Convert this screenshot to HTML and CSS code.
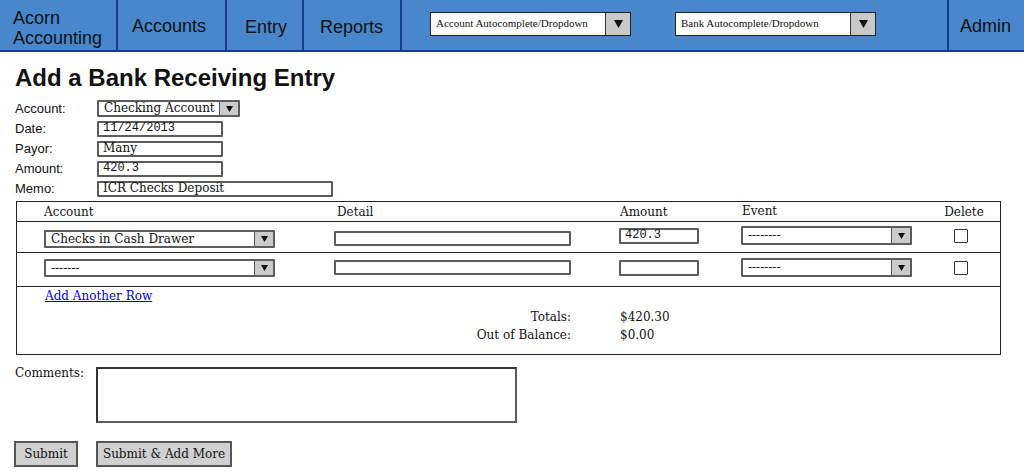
FILE: index.html
```html
<!DOCTYPE html>
<html lang="en">
<head>
<meta charset="utf-8">
<title>Add a Bank Receiving Entry</title>
<link rel="stylesheet" href="styles.css">
</head>
<body>
<header class="topbar">
  <div class="nav-cell brand">Acorn<br>Accounting</div>
  <div class="nav-cell accounts">Accounts</div>
  <div class="nav-cell entry">Entry</div>
  <div class="nav-cell reports">Reports</div>
  <div class="nav-tools">
    <div class="hselect"><span class="hselect-val">Account Autocomplete/Dropdown</span><span class="hselect-btn"><svg width="9" height="8" viewBox="0 0 9 8"><polygon points="0,0 9,0 4.5,8" fill="#111"/></svg></span></div>
    <div class="hselect"><span class="hselect-val">Bank Autocomplete/Dropdown</span><span class="hselect-btn"><svg width="9" height="8" viewBox="0 0 9 8"><polygon points="0,0 9,0 4.5,8" fill="#111"/></svg></span></div>
  </div>
  <div class="nav-cell admin">Admin</div>
</header>

<main class="page">
  <h1 class="title">Add a Bank Receiving Entry</h1>

  <div class="form-grid">
    <span class="flabel">Account:</span>
    <div class="select sel-account"><span class="select-val">Checking Account</span><span class="select-btn"><svg width="7" height="6" viewBox="0 0 7 6"><polygon points="0,0 7,0 3.5,6" fill="#111"/></svg></span></div>
    <span class="flabel">Date:</span>
    <div class="field w-short mono">11/24/2013</div>
    <span class="flabel">Payor:</span>
    <div class="field w-short">Many</div>
    <span class="flabel">Amount:</span>
    <div class="field w-short mono">420.3</div>
    <span class="flabel">Memo:</span>
    <div class="field w-memo">ICR Checks Deposit</div>
  </div>

  <div class="lines">
    <div class="lrow lhead">
      <div class="c-acct">Account</div>
      <div class="c-detail hpad">Detail</div>
      <div class="c-amt hpad1">Amount</div>
      <div class="c-event hpad1 up">Event</div>
      <div class="c-del">Delete</div>
    </div>
    <div class="lrow r1">
      <div class="c-acct"><div class="select sel-line down3"><span class="select-val">Checks in Cash Drawer</span><span class="select-btn"><svg width="7" height="6" viewBox="0 0 7 6"><polygon points="0,0 7,0 3.5,6" fill="#111"/></svg></span></div></div>
      <div class="c-detail"><div class="field w-detail down2"></div></div>
      <div class="c-amt"><div class="field w-amt mono up2">420.3</div></div>
      <div class="c-event"><div class="select sel-event up2"><span class="select-val">--------</span><span class="select-btn"><svg width="7" height="6" viewBox="0 0 7 6"><polygon points="0,0 7,0 3.5,6" fill="#111"/></svg></span></div></div>
      <div class="c-del"><span class="check"></span></div>
    </div>
    <div class="lrow r2">
      <div class="c-acct"><div class="select sel-line"><span class="select-val">-------</span><span class="select-btn"><svg width="7" height="6" viewBox="0 0 7 6"><polygon points="0,0 7,0 3.5,6" fill="#111"/></svg></span></div></div>
      <div class="c-detail"><div class="field w-detail"></div></div>
      <div class="c-amt"><div class="field w-amt"></div></div>
      <div class="c-event"><div class="select sel-event"><span class="select-val">--------</span><span class="select-btn"><svg width="7" height="6" viewBox="0 0 7 6"><polygon points="0,0 7,0 3.5,6" fill="#111"/></svg></span></div></div>
      <div class="c-del"><span class="check"></span></div>
    </div>
    <div class="lfoot">
      <a class="add-row" href="#">Add Another Row</a>
      <div class="totals">
        <span class="tlabel">Totals:</span><span class="tval">$420.30</span>
        <span class="tlabel">Out of Balance:</span><span class="tval">$0.00</span>
      </div>
    </div>
  </div>

  <div class="comments">
    <span class="clabel">Comments:</span>
    <div class="textarea"></div>
  </div>

  <div class="buttons">
    <span class="btn btn-submit">Submit</span>
    <span class="btn btn-more">Submit &amp; Add More</span>
  </div>
</main>
</body>
</html>
```
FILE: styles.css
```css
* { box-sizing: border-box; }

body {
  margin: 0;
  font-family: "DejaVu Serif", serif;
  font-size: 12px;
  color: #111;
  background: #fff;
}

/* ---------- top bar ---------- */
.topbar {
  display: flex;
  height: 52px;
  background: #4887cb;
  border-bottom: 2px solid #1d3a8c;
  font-family: "Liberation Sans", Arial, sans-serif;
  font-size: 18px;
  color: #111;
}
.nav-cell {
  display: flex;
  align-items: center;
  border-right: 2px solid #1d3a8c;
}
.brand { width: 118px; padding-left: 13px; line-height: 20px; padding-top: 5px; }
.accounts { width: 109px; padding-left: 14px; padding-top: 3px; }
.entry { width: 77px; padding-left: 18px; padding-top: 5px; }
.reports { width: 98px; padding-left: 16px; padding-top: 5px; }
.admin {
  width: 77px;
  padding-left: 11px;
  border-right: none;
  border-left: 2px solid #1d3a8c;
  padding-top: 3px;
}
.nav-tools {
  flex: 1;
  display: flex;
  align-items: center;
  gap: 44px;
  padding-left: 28px;
  padding-bottom: 2px;
}
.hselect {
  display: flex;
  width: 201px;
  height: 24px;
  background: #fff;
  border: 1px solid #222;
}
.hselect-val {
  flex: 1;
  padding-left: 5px;
  font-family: "Liberation Serif", "Times New Roman", serif;
  font-size: 11px;
  line-height: 20px;
}
.hselect-btn {
  width: 25px;
  background: #c9c9c9;
  border-left: 1px solid #333;
  display: flex;
  align-items: center;
  justify-content: center;
}

/* ---------- page ---------- */
.page { padding-left: 15px; }

.title {
  margin: 12px 0 8px;
  font-family: "Liberation Sans", Arial, sans-serif;
  font-weight: bold;
  font-size: 24px;
  line-height: 28px;
}

.form-grid {
  display: grid;
  grid-template-columns: 82px auto;
  grid-template-rows: 17px 16px 16px 16px 16px;
  row-gap: 4px;
  align-items: center;
}
.flabel {
  font-family: "Liberation Sans", Arial, sans-serif;
  font-size: 13px;
  line-height: 16px;
}

.field {
  height: 16px;
  border: 2px solid #5c5c5c;
  border-radius: 1px;
  background: #fff;
  padding-left: 4px;
  font-size: 12px;
  line-height: 11px;
  justify-self: start;
  white-space: nowrap;
}
.mono { font-family: "Liberation Mono", "Courier New", monospace; }
.w-short { width: 126px; }
.w-memo { width: 236px; }
.w-detail { width: 237px; height: 15px; }
.w-amt { width: 80px; }

.select {
  display: flex;
  height: 17px;
  border: 2px solid #5c5c5c;
  border-radius: 1px;
  background: #fff;
  justify-self: start;
}
.select-val {
  flex: 1;
  padding-left: 5px;
  font-size: 12px;
  line-height: 12px;
  white-space: nowrap;
  overflow: hidden;
}
.select-btn {
  width: 19px;
  background: #cbcbcb;
  border-left: 1px solid #555;
  display: flex;
  align-items: center;
  justify-content: center;
}
.sel-account { width: 143px; }
.sel-line { width: 231px; height: 18px; }
.sel-line .select-val { line-height: 14px; }
.sel-event { width: 171px; height: 19px; }
.sel-event .select-val { line-height: 15px; }

/* ---------- lines table ---------- */
.lines {
  margin-top: 4px;
  margin-left: 1px;
  width: 985px;
  border: 1px solid #222;
}
.lrow {
  display: flex;
  align-items: center;
  padding-left: 27px;
  border-bottom: 1px solid #222;
}
.lhead { height: 20px; line-height: 20px; }
.r1 { height: 31px; }
.r2 { height: 34px; padding-bottom: 4px; }
.c-acct { width: 290px; flex-shrink: 0; }
.c-detail { width: 285px; flex-shrink: 0; }
.c-amt { width: 122px; flex-shrink: 0; }
.c-event { width: 171px; flex-shrink: 0; }
.c-del {
  width: 87px;
  flex-shrink: 0;
  padding-left: 11px;
  display: flex;
  justify-content: center;
}
.lhead .c-del { padding-left: 17px; }
.hpad { padding-left: 3px; }
.hpad1 { padding-left: 1px; }
.up { margin-top: -2px; }
.up2 { margin-top: -3px; }
.down2 { margin-top: 2px; }
.down3 { margin-top: 3px; }

.check {
  width: 14px;
  height: 14px;
  border: 1px solid #333;
  border-radius: 1px;
  background: #fff;
}
.r1 .check { margin-top: -2px; }

.lfoot {
  height: 67px;
  padding-top: 1px;
}
.add-row {
  display: inline-block;
  margin-left: 28px;
  color: #0000ee;
  text-decoration: underline;
  line-height: 17px;
}
.totals {
  display: grid;
  grid-template-columns: 554px auto;
  column-gap: 49px;
  margin-top: 3px;
  line-height: 18px;
}
.tlabel { text-align: right; }

/* ---------- comments and buttons ---------- */
.comments {
  display: flex;
  align-items: flex-start;
  margin-top: 12px;
}
.clabel { width: 81px; line-height: 12px; }
.textarea {
  width: 421px;
  height: 56px;
  border: 2px solid #5c5c5c;
  border-top-color: #333;
  border-left-color: #333;
  background: #fff;
}

.buttons {
  display: flex;
  gap: 18px;
  margin-top: 18px;
  margin-left: -1px;
}
.btn {
  display: flex;
  align-items: center;
  justify-content: center;
  height: 26px;
  background: #d0d0d0;
  border: 2px solid #555;
  font-size: 12px;
}
.btn-submit { width: 64px; }
.btn-more { width: 136px; }
```
